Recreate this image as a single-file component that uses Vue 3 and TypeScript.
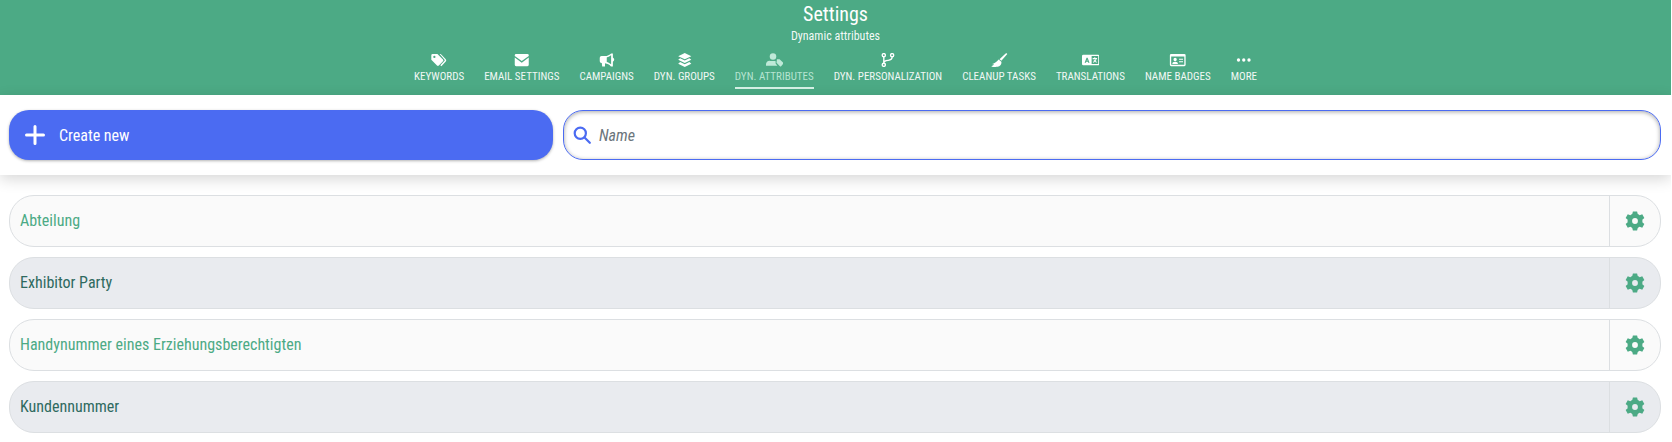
<script setup lang="ts">
interface NavItem { label: string; icon: string; active?: boolean }
const nav: NavItem[] = [
  { label: 'Keywords', icon: 'tags' },
  { label: 'Email settings', icon: 'mail' },
  { label: 'Campaigns', icon: 'bullhorn' },
  { label: 'Dyn. groups', icon: 'layers' },
  { label: 'Dyn. attributes', icon: 'usertag', active: true },
  { label: 'Dyn. personalization', icon: 'branch' },
  { label: 'Cleanup tasks', icon: 'broom' },
  { label: 'Translations', icon: 'language' },
  { label: 'Name badges', icon: 'idcard' },
  { label: 'More', icon: 'dots' },
]
const rows = ['Abteilung', 'Exhibitor Party', 'Handynummer eines Erziehungsberechtigten', 'Kundennummer']
</script>

<template>
  <div class="page">
    <header class="hero">
      <h1 class="title">Settings</h1>
      <p class="subtitle">Dynamic attributes</p>
      <nav class="nav">
        <a v-for="item in nav" :key="item.label" class="nav-item" :class="{ active: item.active }">
          <svg class="nav-icon" viewBox="0 0 20 16" fill="currentColor">
            <template v-if="item.icon === 'tags'">
              <path fill-rule="evenodd" d="M3 1h5.500l6.300 6.300a1.500 1.500 0 0 1 0 2.100l-4.700 4.900a1.500 1.500 0 0 1-2.100 0L1.500 7.800V2.500A1.500 1.500 0 0 1 3 1zM5 3.200a1.300 1.300 0 1 0 0 2.600 1.300 1.300 0 0 0 0-2.600z" />
              <path d="M11 1h1.300l5.700 6.100a2 2 0 0 1 0 2.700L13 15l-1.200-.9 4.800-5.200a1 1 0 0 0 0-1.300z" />
            </template>
            <path v-else-if="item.icon === 'mail'" d="M3.500 1h13A1.500 1.500 0 0 1 18 2.500v1l-8 5.700-8-5.700v-1A1.500 1.500 0 0 1 3.500 1zM2 5.200l8 5.800 8-5.800v8.300a1.500 1.500 0 0 1-1.500 1.500h-13A1.500 1.500 0 0 1 2 13.500z" />
            <path v-else-if="item.icon === 'bullhorn'" fill-rule="evenodd" d="M15 .5h2v4.500a2.800 2.800 0 0 1 0 5v5.500h-2l-.5-.5c-1.500-1.500-3.800-2.800-6.500-3.200v3.700H4.800l-.5-4H4a2 2 0 0 1-2-2V5.500a2 2 0 0 1 2-2h4c2.500 0 5.500-1.300 7-3zM10 5.200v5.100c1.500.4 3 1.200 5 2.500V2.700C13 4 11.500 4.800 10 5.200z" />
            <template v-else-if="item.icon === 'layers'">
              <path d="M10 0l7.500 3.600L10 7.200 2.500 3.600z" />
              <path d="M4.700 6L10 8.500 15.300 6l2.200 1.800L10 11.400 2.500 7.800z" />
              <path d="M4.700 10.300L10 12.800l5.300-2.500 2.200 1.900L10 16 2.500 12.200z" />
            </template>
            <template v-else-if="item.icon === 'usertag'">
              <circle cx="8" cy="4" r="3.700" />
              <path d="M5 9h5.500l.5.500V12l2 2.500H0v-1.500A4 4 0 0 1 5 9z" />
              <path d="M12.500 7h3l4 4a1 1 0 0 1 0 1.400L17.300 15a1 1 0 0 1-1.400 0L12 11z" />
            </template>
            <template v-else-if="item.icon === 'branch'">
              <g fill="none" stroke="currentColor" stroke-width="1.600">
                <circle cx="5.500" cy="2.500" r="1.800" />
                <circle cx="5.500" cy="13.500" r="1.800" />
                <circle cx="15" cy="2.500" r="1.800" />
                <path d="M5.500 4.300v7.400M15 4.300c0 3-2.300 3.900-4.500 4.100-2.200.2-5 .4-5 3" />
              </g>
            </template>
            <template v-else-if="item.icon === 'broom'">
              <path d="M18.500 0l1.300 1.200-6.800 7.600-2.200-1.800z" />
              <path d="M9.800 7.300l3.200 2.700c.5 2.700-1.200 5.300-4.300 5.800-2.500.3-5.700.2-7.200-.8 1.400-.3 2.500-1 3-2.100-.7.100-1.300 0-2-.3 2.300-.5 5-2.600 7.300-5.300z" />
            </template>
            <path v-else-if="item.icon === 'language'" fill-rule="evenodd" d="M1.500 2h17A1.500 1.500 0 0 1 20 3.500v9a1.500 1.500 0 0 1-1.500 1.500h-17A1.500 1.500 0 0 1 0 12.500v-9A1.500 1.500 0 0 1 1.500 2zM11 3.500v9h7.500v-9zM5.200 5.500L3 11h1.500l.4-1h1.800l.4 1h1.500L6.400 5.500zM5.800 7.500l.5 1.300h-1zM14 4.800h1.200v1h2v1.100h-.6c-.2 1-.6 1.800-1.100 2.400.4.300.9.500 1.500.7l-.4 1c-.7-.2-1.300-.5-1.800-.9-.5.4-1.200.7-2 .9l-.4-1c.7-.1 1.200-.4 1.700-.7-.4-.4-.7-.9-.9-1.300l1.100-.3c.1.300.3.500.5.800.3-.4.500-.9.600-1.500h-3.200V5.800H14z" />
            <path v-else-if="item.icon === 'idcard'" fill-rule="evenodd" d="M2.500 1h15A1.500 1.500 0 0 1 19 2.500v11a1.500 1.500 0 0 1-1.500 1.500h-15A1.500 1.500 0 0 1 1 13.500v-11A1.500 1.500 0 0 1 2.500 1zM2.500 4v9.500h15V4zM7 5.500a1.900 1.900 0 1 1 0 3.800A1.900 1.900 0 0 1 7 5.500zM3.800 12.500c0-1.700 1.100-2.600 3.200-2.600s3.200.9 3.200 2.600zM11.500 6.500h4.500v1.300h-4.500zM11.500 9.300h4.500v1.300h-4.500z" />
            <template v-else-if="item.icon === 'dots'">
              <circle cx="4" cy="8" r="1.900" />
              <circle cx="10" cy="8" r="1.900" />
              <circle cx="16" cy="8" r="1.900" />
            </template>
          </svg>
          <span class="nav-label">{{ item.label }}</span>
        </a>
      </nav>
    </header>

    <section class="toolbar">
      <button class="create" type="button">
        <svg class="plus" viewBox="0 0 20 20" fill="none" stroke="currentColor" stroke-width="3" stroke-linecap="round">
          <path d="M10 1.500v17M1.500 10h17" />
        </svg>
        <span>Create new</span>
      </button>
      <label class="search">
        <svg class="search-icon" viewBox="0 0 18 18" fill="none" stroke="currentColor" stroke-width="2.200">
          <circle cx="7.300" cy="7.300" r="5.600" />
          <path d="M11.500 11.500l5.300 5.300" stroke-linecap="round" />
        </svg>
        <span class="placeholder">Name</span>
      </label>
    </section>

    <ul class="list">
      <li v-for="(row, i) in rows" :key="row" class="row" :class="i % 2 ? 'even' : 'odd'">
        <span class="row-label">{{ row }}</span>
        <span class="row-action">
          <svg class="gear" viewBox="0 0 24 24" fill="currentColor" fill-rule="evenodd">
            <path d="M9.500.5h5l.8 3.200a8.500 8.500 0 0 1 2.300 1.300l3.100-1 2.500 4.300-2.400 2.200a8.500 8.500 0 0 1 0 3l2.400 2.200-2.500 4.300-3.100-1a8.500 8.500 0 0 1-2.300 1.300l-.8 3.200h-5l-.8-3.200A8.500 8.500 0 0 1 6.400 19l-3.100 1-2.500-4.300L3.200 13.500a8.500 8.500 0 0 1 0-3L.8 8.300l2.500-4.300 3.100 1a8.500 8.500 0 0 1 2.300-1.300zM12 8.500a3.500 3.500 0 1 0 0 7 3.500 3.500 0 0 0 0-7z" />
          </svg>
        </span>
      </li>
    </ul>
  </div>
</template>

<style>
html, body { margin: 0; background: #fff; overflow: hidden; }
</style>

<style scoped>
.page {
  width: 1671px;
  height: 442px;
  overflow: hidden;
  font-family: Roboto, "Liberation Sans", sans-serif;
  font-stretch: 75%;
}
.hero {
  height: 95px;
  box-sizing: border-box;
  background: #4caa85;
  color: #fff;
  text-align: center;
  padding-top: 2px;
}
.title { margin: 0; font-size: 20px; font-weight: 400; line-height: 24px; }
.subtitle { margin: 0; font-size: 12px; line-height: 15px; height: 18px; padding-top: 3px; box-sizing: border-box; color: rgba(255, 255, 255, 0.94); }
.nav { display: flex; justify-content: center; gap: 20px; margin-top: 9px; }
.nav-item { display: flex; flex-direction: column; align-items: center; color: #fff; height: 36px; box-sizing: border-box; }
.nav-item.active { color: #bfe9d8; border-bottom: 2px solid #d6f1e6; }
.nav-icon { width: 17.5px; height: 14px; display: block; flex: none; }
.nav-label { font-size: 11px; line-height: 16px; margin-top: 2px; text-transform: uppercase; white-space: nowrap; opacity: 0.92; }
.toolbar {
  position: relative;
  height: 80px;
  box-sizing: border-box;
  padding: 15px 10px 15px 9px;
  display: flex;
  gap: 10px;
  background: #fff;
  box-shadow: 0 4px 14px rgba(0, 0, 0, 0.16);
}
.create {
  width: 544px;
  height: 50px;
  flex: none;
  display: flex;
  align-items: center;
  gap: 14px;
  padding: 0 16px;
  border: 0;
  border-radius: 20px;
  background: #4b6bf2;
  color: #fff;
  font: inherit;
  font-stretch: 75%;
  font-size: 16px;
  box-shadow: 0 1px 3px rgba(0, 0, 0, 0.3);
}
.plus { width: 20px; height: 20px; }
.search {
  flex: 1;
  height: 50px;
  box-sizing: border-box;
  display: flex;
  align-items: center;
  gap: 8px;
  padding: 0 9px;
  border: 1px solid #4b6bf2;
  border-radius: 20px;
  box-shadow: inset 0 1px 4px rgba(0, 0, 0, 0.35);
}
.search-icon { width: 18px; height: 18px; color: #4b6bf2; }
.placeholder { font-size: 16px; font-style: italic; color: #6b757b; }
.list { list-style: none; margin: 20px 0 0; padding: 0 10px 0 9px; display: flex; flex-direction: column; gap: 10px; }
.row {
  height: 52px;
  box-sizing: border-box;
  display: flex;
  border: 1px solid #dcdfe2;
  border-radius: 25px;
}
.row.odd { background: #fafafa; color: #4caa85; }
.row.even { background: #e9ebef; color: #2f6a5f; }
.row-label { flex: 1; display: flex; align-items: center; padding: 0 0 2px 10px; font-size: 16px; }
.row-action { width: 51px; box-sizing: border-box; flex: none; display: flex; align-items: center; justify-content: center; border-left: 1px solid #dcdfe2; color: #4caa85; }
.gear { width: 20px; height: 20px; }
</style>
